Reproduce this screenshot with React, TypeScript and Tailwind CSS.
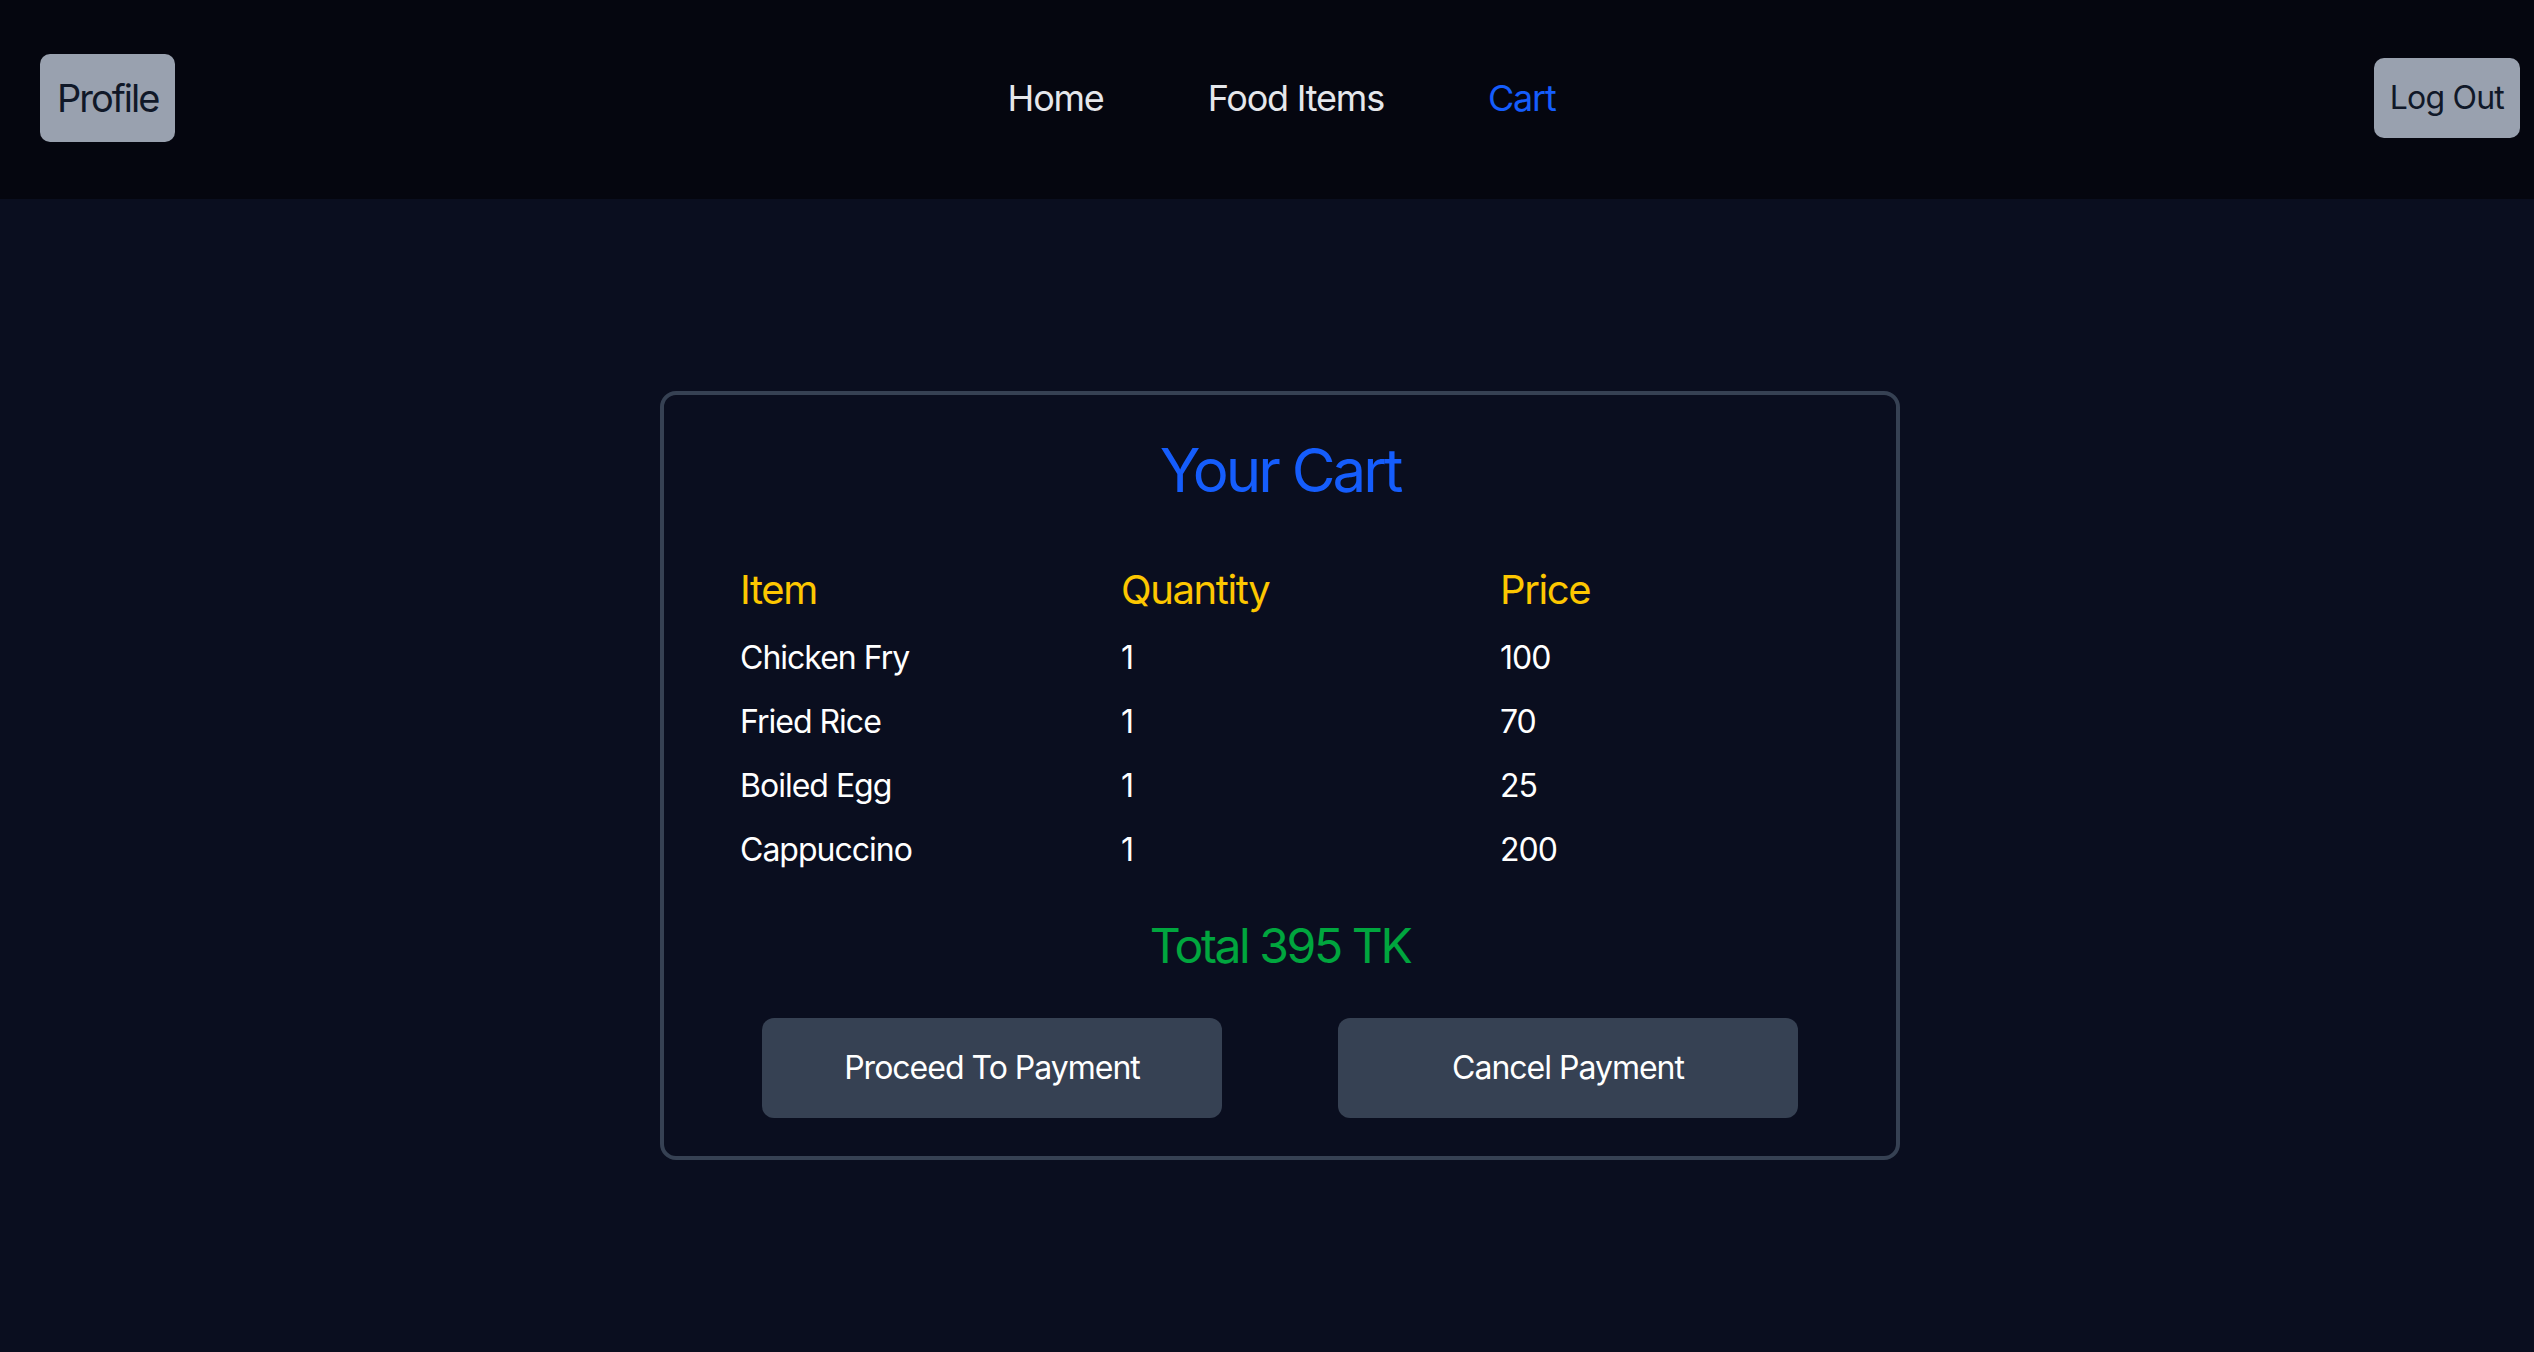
const cartItems = [
  { name: 'Chicken Fry', qty: 1, price: 100 },
  { name: 'Fried Rice', qty: 1, price: 70 },
  { name: 'Boiled Egg', qty: 1, price: 25 },
  { name: 'Cappuccino', qty: 1, price: 200 },
]

function Header() {
  return (
    <header className="flex h-[199px] items-center justify-between bg-[#05060f] px-[40px] pb-[3px]">
      <button className="rounded-[10px] bg-gray-400 px-[17px] py-[16px] text-[38px] leading-[56px] tracking-[-2px] text-gray-900">
        Profile
      </button>
      <nav className="ml-[14px] flex items-center gap-[104px] text-[36px] leading-[56px] tracking-[-1.2px] text-gray-200">
        <a href="#">Home</a>
        <a href="#">Food Items</a>
        <a href="#" className="text-blue-600">Cart</a>
      </nav>
      <button className="rounded-[10px] bg-gray-400 px-[16px] py-[16px] text-[32px] leading-[48px] tracking-[-0.8px] text-gray-900">
        Log Out
      </button>
    </header>
  )
}

export default function App() {
  const total = cartItems.reduce((sum, i) => sum + i.price * i.qty, 0)

  return (
    <div className="min-h-screen w-full overflow-hidden bg-[#0a0e1f] font-['Inter',sans-serif]">
      <div className="w-[2560px]">
        <Header />

        <main className="flex justify-center pt-[192px]">
          <div className="w-[1240px] rounded-[16px] border-[4px] border-gray-700 pb-[38px] pt-[39px]">
            {/* Title */}
            <h2 className="text-center text-[60px] leading-[72px] tracking-[-3px] text-blue-600">Your Cart</h2>

            {/* Table */}
            <div className="mt-[48px] grid grid-cols-[381px_379px_1fr] px-[76px]">
              <div className="py-[8px] text-[40px] leading-[56px] tracking-[-1.4px] text-yellow-400">Item</div>
              <div className="py-[8px] text-[40px] leading-[56px] tracking-[-1.4px] text-yellow-400">Quantity</div>
              <div className="py-[8px] text-[40px] leading-[56px] tracking-[-1.4px] text-yellow-400">Price</div>
              {cartItems.map((item) => (
                <div key={item.name} className="contents text-[32px] leading-[48px] tracking-[-1px] text-white">
                  <div className="py-[8px]">{item.name}</div>
                  <div className="py-[8px]">{item.qty}</div>
                  <div className="py-[8px]">{item.price}</div>
                </div>
              ))}
            </div>

            {/* Total */}
            <p className="mt-[32px] text-center text-[48px] leading-[64px] tracking-[-2.4px] text-green-600">
              Total {total} TK
            </p>

            {/* Actions */}
            <div className="mt-[40px] flex justify-center gap-[116px]">
              <button className="h-[100px] w-[460px] rounded-[12px] bg-gray-700 text-[32px] leading-[48px] tracking-[-1px] text-white">
                Proceed To Payment
              </button>
              <button className="h-[100px] w-[460px] rounded-[12px] bg-gray-700 text-[32px] leading-[48px] tracking-[-1px] text-white">
                Cancel Payment
              </button>
            </div>
          </div>
        </main>
      </div>
    </div>
  )
}
